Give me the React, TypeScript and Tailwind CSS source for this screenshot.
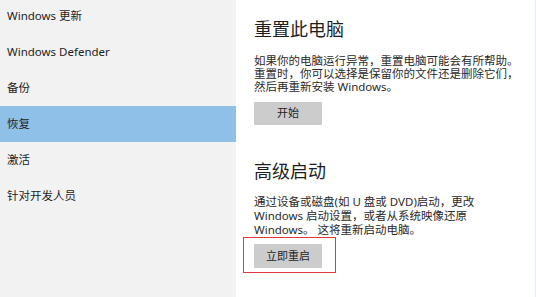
const font = { fontFamily: '"Noto Sans", "Noto Sans CJK SC", sans-serif' };

const navItems = ['Windows 更新', 'Windows Defender', '备份', '恢复', '激活', '针对开发人员'];

function Sidebar() {
  return (
    <div className="w-[236px] shrink-0 bg-[#f2f2f2]">
      <div className="-mt-[2px] flex flex-col">
        {navItems.map((item) => (
          <div
            key={item}
            className={
              'flex h-[36px] items-center px-[7px] text-[11.5px] text-[#1e1e1e] ' +
              (item === '恢复' ? 'bg-[#8fc0e8]' : '')
            }
          >
            {item}
          </div>
        ))}
      </div>
    </div>
  );
}

export default function App() {
  return (
    <div className="flex h-[297px] w-[536px] overflow-hidden bg-white" style={font}>
      <Sidebar />
      <div className="flex-1 border-r border-[#e4eef7] pl-[18px] pt-[17px] text-[#1e1e1e]">
        <h2 className="text-[18px] leading-[24px]">重置此电脑</h2>
        <p className="mt-[13px] whitespace-nowrap text-[11.5px] leading-[13px] text-[#2a2a2a]">
          如果你的电脑运行异常，重置电脑可能会有所帮助。
          <br />
          重置时，你可以选择是保留你的文件还是删除它们，
          <br />
          然后再重新安装 Windows。
        </p>
        <button className="mt-[9px] flex h-[23px] w-[68px] items-center justify-center bg-[#cccccc] text-[11px] text-[#1e1e1e]">
          开始
        </button>

        <h2 className="mt-[34px] text-[18px] leading-[24px]">高级启动</h2>
        <p className="mt-[12px] whitespace-nowrap text-[11.5px] leading-[14px] text-[#2a2a2a]">
          通过设备或磁盘(如 U 盘或 DVD)启动，更改
          <br />
          Windows 启动设置，或者从系统映像还原
          <br />
          Windows。 这将重新启动电脑。
        </p>
        <div className="relative mt-[7px] w-[68px]">
          <button className="flex h-[24px] w-[68px] items-center justify-center bg-[#cccccc] text-[11px] text-[#1e1e1e]">
            立即重启
          </button>
          <div className="pointer-events-none absolute -left-[11px] -top-[7px] -bottom-[5px] -right-[14px] border-[1.5px] border-[#e2383c]" />
        </div>
      </div>
    </div>
  );
}
